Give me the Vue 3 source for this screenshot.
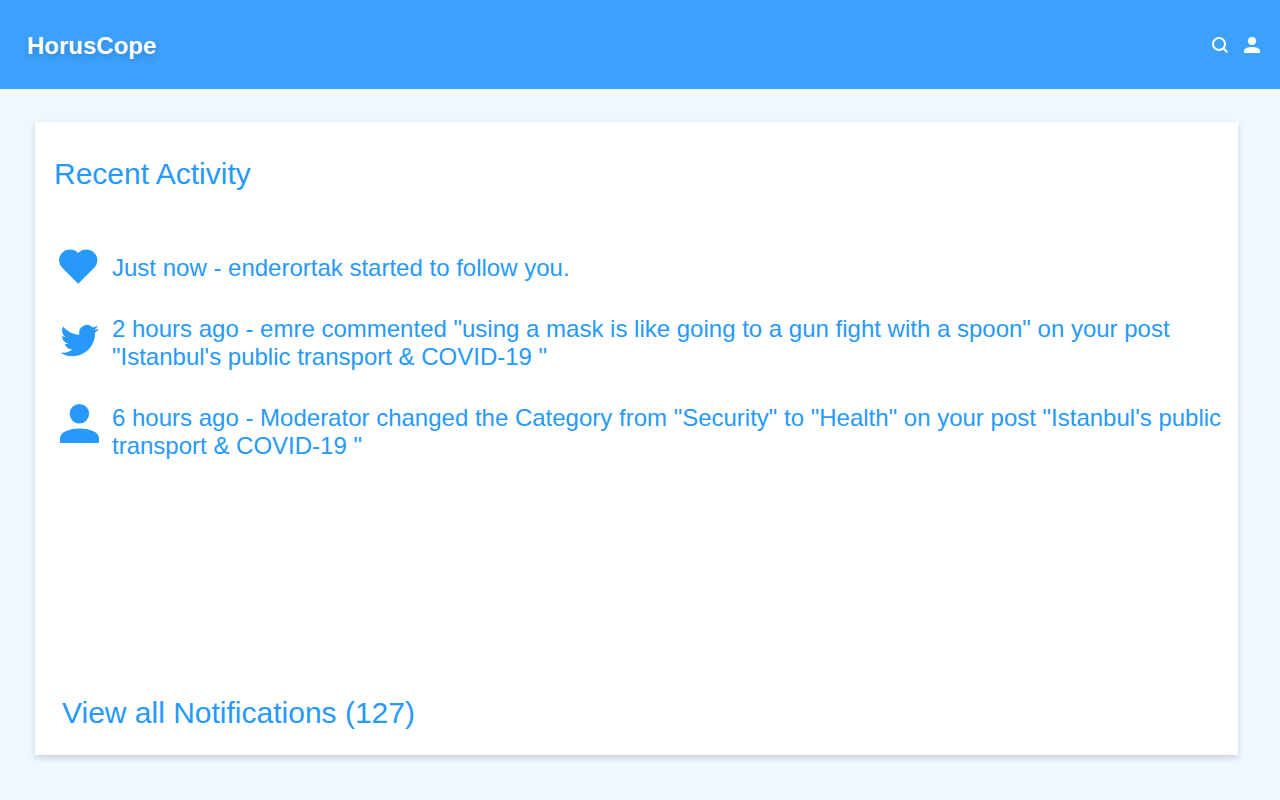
<script setup>
const activities = [
  { icon: 'heart', text: 'Just now - enderortak started to follow you.' },
  {
    icon: 'bird',
    text: '2 hours ago - emre commented "using a mask is like going to a gun fight with a spoon" on your post "Istanbul\'s public transport & COVID-19 "',
  },
  {
    icon: 'person',
    text: '6 hours ago - Moderator changed the Category from "Security" to "Health" on your post "Istanbul\'s public transport & COVID-19 "',
  },
]
</script>

<template>
  <div class="page">
    <header class="topbar">
      <a class="brand" href="#">HorusCope</a>
      <nav class="actions" aria-label="Main">
        <button type="button" aria-label="Search">
          <svg viewBox="0 0 16 16" width="16" height="16" fill="none" stroke="currentColor" stroke-width="2">
            <circle cx="7" cy="7" r="6" />
            <path d="M11 11 15.3 15.3" />
          </svg>
        </button>
        <button type="button" aria-label="Profile">
          <svg viewBox="0 0 16 16" width="16" height="16" fill="currentColor">
            <circle cx="8" cy="4" r="4" />
            <path d="M0 16v-2.2C0 11.6 4 10 8 10s8 1.6 8 3.8V16z" />
          </svg>
        </button>
      </nav>
    </header>

    <main class="content">
      <section class="card">
        <h1>Recent Activity</h1>
        <ul class="feed">
          <li v-for="item in activities" :key="item.icon" :class="item.icon">
            <svg v-if="item.icon === 'heart'" class="icon" viewBox="0 0 40 40" aria-hidden="true">
              <path d="M19.2 35.8 3.2 19.7C-1 15.500-1 9 3.2 4.800 7.600.5 15 .5 19.200 5 23.400.5 30.800.5 35.200 4.800c4.200 4.200 4.200 10.700 0 14.900z" />
            </svg>
            <svg v-else-if="item.icon === 'bird'" class="icon" viewBox="0 0 40 40" aria-hidden="true">
              <path transform="translate(1.500 -1.600) scale(1.600)" d="M23.953 4.570a10 10 0 01-2.825.775 4.958 4.958 0 002.163-2.723c-.951.555-2.005.959-3.127 1.184a4.920 4.920 0 00-8.384 4.482C7.690 8.095 4.067 6.130 1.640 3.162a4.822 4.822 0 00-.666 2.475c0 1.710.870 3.213 2.188 4.096a4.904 4.904 0 01-2.228-.616v.060a4.923 4.923 0 003.946 4.827 4.996 4.996 0 01-2.212.085 4.936 4.936 0 004.604 3.417 9.867 9.867 0 01-6.102 2.105c-.390 0-.779-.023-1.170-.067a13.995 13.995 0 007.557 2.209c9.053 0 13.998-7.496 13.998-13.985 0-.210 0-.420-.015-.630A9.935 9.935 0 0024 4.590z" />
            </svg>
            <svg v-else class="icon" viewBox="0 0 40 40" aria-hidden="true">
              <circle cx="20.400" cy="9.750" r="9.750" />
              <path d="M1 39v-4.900C1 27.700 11 24.400 20.500 24.400S40 27.700 40 34.100V39z" />
            </svg>
            <p>{{ item.text }}</p>
          </li>
        </ul>
        <a class="view-all" href="#">View all Notifications (127)</a>
      </section>
    </main>
  </div>
</template>

<style>
body {
  margin: 0;
}
</style>

<style scoped>
.page {
  display: flex;
  flex-direction: column;
  box-sizing: border-box;
  min-height: 100vh;
  background: #f0f8ff;
  color: #2699fb;
  font-family: "Liberation Sans", Arial, sans-serif;
}
.topbar {
  display: flex;
  align-items: center;
  justify-content: space-between;
  box-sizing: border-box;
  height: 89px;
  padding: 0 20px 0 27px;
  background: #3ca1fc;
  color: #fff;
}
.brand {
  padding-top: 2px;
  color: inherit;
  font-size: 24px;
  font-weight: 700;
  line-height: 28px;
  text-decoration: none;
  text-shadow: 0 3px 6px rgba(0, 0, 0, 0.18);
}
.actions {
  display: flex;
  gap: 16px;
}
.actions button {
  display: block;
  padding: 0;
  border: 0;
  background: none;
  color: inherit;
  cursor: pointer;
}
.actions svg {
  display: block;
}
.content {
  display: flex;
  flex: 1;
  padding: 33px 42px 45px 35px;
}
.card {
  display: flex;
  flex: 1;
  flex-direction: column;
  align-items: flex-start;
  padding: 34px 12px 24px 19px;
  background: #fff;
  box-shadow: 0 3px 6px rgba(0, 0, 0, 0.16);
}
h1 {
  margin: 0;
  font-size: 30px;
  font-weight: 400;
  line-height: 36px;
}
.feed {
  display: flex;
  flex-direction: column;
  gap: 27px;
  margin: 56px 0 32px;
  padding: 0 0 0 5px;
  list-style: none;
}
.feed li {
  display: flex;
  align-items: center;
  gap: 13px;
}
.feed .person {
  align-items: flex-start;
  margin-top: 6px;
}
.icon {
  flex: none;
  width: 40px;
  height: 40px;
  fill: currentColor;
}
.feed p {
  margin: 0;
  font-size: 24px;
  line-height: 28px;
}
.view-all {
  margin: auto 0 0 8px;
  color: inherit;
  font-size: 30px;
  line-height: 36px;
  text-decoration: none;
}
</style>
